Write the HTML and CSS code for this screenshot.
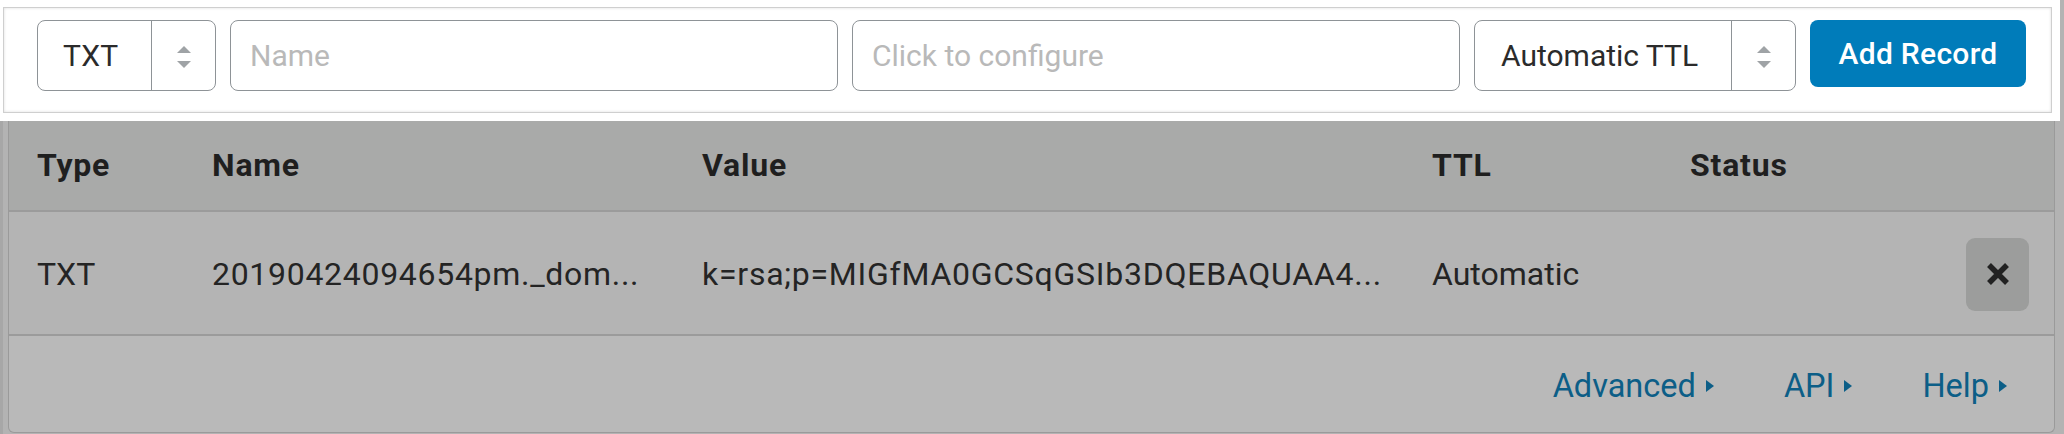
FILE: index.html
```html
<!DOCTYPE html>
<html lang="en">
<head>
<meta charset="utf-8">
<title>DNS records</title>
<link rel="stylesheet" href="styles.css">
</head>
<body>
<div class="screen">
  <form class="add-form">
    <div class="field select">
      <span class="value">TXT</span>
      <span class="arrows"><i class="up"></i><i class="down"></i></span>
    </div>
    <div class="field input"><span class="placeholder">Name</span></div>
    <div class="field input"><span class="placeholder">Click to configure</span></div>
    <div class="field select ttl">
      <span class="value">Automatic TTL</span>
      <span class="arrows"><i class="up"></i><i class="down"></i></span>
    </div>
    <button type="button" class="btn-add">Add Record</button>
  </form>

  <div class="records">
    <div class="row head">
      <span>Type</span><span>Name</span><span>Value</span><span>TTL</span><span>Status</span><span></span>
    </div>
    <div class="row record">
      <span>TXT</span>
      <span class="cell-name">20190424094654pm._dom...</span>
      <span class="cell-value">k=rsa;p=MIGfMA0GCSqGSIb3DQEBAQUAA4...</span>
      <span>Automatic</span>
      <span></span>
      <button type="button" class="del" aria-label="Delete">
        <svg viewBox="0 0 28 28" width="28" height="28"><path d="M5 5 L23 23 M23 5 L5 23" stroke="#222" stroke-width="5.5" fill="none"/></svg>
      </button>
    </div>
    <div class="foot">
      <a class="link">Advanced<i class="tri"></i></a>
      <a class="link">API<i class="tri"></i></a>
      <a class="link">Help<i class="tri"></i></a>
    </div>
  </div>
</div>
</body>
</html>
```

FILE: styles.css
```css
* { box-sizing: border-box; }

html, body { margin: 0; }

body {
  width: 2064px;
  height: 434px;
  overflow: hidden;
  background: #a7a7a7;
  font-family: Roboto, "Liberation Sans", Arial, sans-serif;
  font-size: 30px;
  color: #222;
}

.screen {
  margin-left: 3px;
  height: 434px;
  padding: 7px 9px 0 0;
  background: #b3b3b3;
  display: flex;
  flex-direction: column;
}

/* highlighted add-record form */
.add-form {
  position: relative;
  z-index: 1;
  margin: 0 3px 0 0;
  height: 106px;
  flex: none;
  background: #fff;
  border: 1px solid #cfcfcf;
  box-shadow: inset 0 0 3px rgba(0, 0, 0, 0.14), 0 0 0 8px #fff;
  padding: 12px 0 0 33px;
  display: grid;
  grid-template-columns: 179px 608px 608px 322px 216px;
  column-gap: 14px;
  align-items: start;
}

.field {
  height: 71px;
  border: 1px solid #8e9397;
  border-radius: 8px;
  background: #fff;
  display: flex;
  align-items: center;
}

.select .value {
  flex: 1;
  padding-left: 25px;
  color: #2b2b2b;
  letter-spacing: 0.3px;
}

.select.ttl .value { padding-left: 26px; letter-spacing: 0; }

.arrows {
  width: 64px;
  align-self: stretch;
  border-left: 1px solid #8e9397;
  display: flex;
  flex-direction: column;
  align-items: center;
  justify-content: center;
  gap: 8px;
  padding-top: 3px;
}

.arrows i {
  display: block;
  width: 0;
  height: 0;
  border-left: 7.5px solid transparent;
  border-right: 7.5px solid transparent;
}

.arrows .up { border-bottom: 7px solid #9fa3a6; }
.arrows .down { border-top: 7px solid #9fa3a6; }

.input { padding-left: 19px; }

.placeholder { color: #b9b9b9; }

.btn-add {
  height: 67px;
  border: 0;
  border-radius: 8px;
  background: #007cba;
  color: #fff;
  font: inherit;
  font-weight: 500;
  letter-spacing: 0.3px;
  padding: 0;
}

/* dimmed records table */
.records {
  flex: 1;
  margin: 0 0 1px 5px;
  border: 1px solid #9a9a9a;
  border-top: 0;
  border-radius: 0 0 6px 6px;
  background: #b9b9b9;
  display: flex;
  flex-direction: column;
  overflow: hidden;
}

.row {
  display: grid;
  grid-template-columns: 175px 490px 730px 258px 1fr 63px;
  align-items: center;
  padding: 0 25px 0 28px;
  border-bottom: 2px solid #9b9b9b;
}

.head {
  height: 99px;
  padding-top: 6px;
  background: #a9aaa9;
  font-size: 32px;
  font-weight: 700;
  letter-spacing: 0.8px;
  color: #1f1f1f;
}

.record {
  height: 124px;
  padding-top: 2px;
  background: #b4b4b4;
  color: #242424;
  font-size: 32px;
}

.cell-name { letter-spacing: 0.7px; }
.cell-value { letter-spacing: 0.75px; }

.del {
  width: 63px;
  height: 73px;
  border: 0;
  border-radius: 9px;
  background: #9c9d9c;
  padding: 0;
  display: flex;
  align-items: center;
  justify-content: center;
}

.del svg { display: block; }

.foot {
  flex: 1;
  display: flex;
  justify-content: flex-end;
  align-items: center;
  padding: 4px 47px 0 0;
}

.link {
  display: flex;
  align-items: center;
  gap: 10px;
  margin-left: 70px;
  color: #0c5e87;
  font-size: 32.5px;
}

.tri {
  display: block;
  width: 0;
  height: 0;
  border-left: 8px solid #0c5e87;
  border-top: 6.5px solid transparent;
  border-bottom: 6.5px solid transparent;
}
```
